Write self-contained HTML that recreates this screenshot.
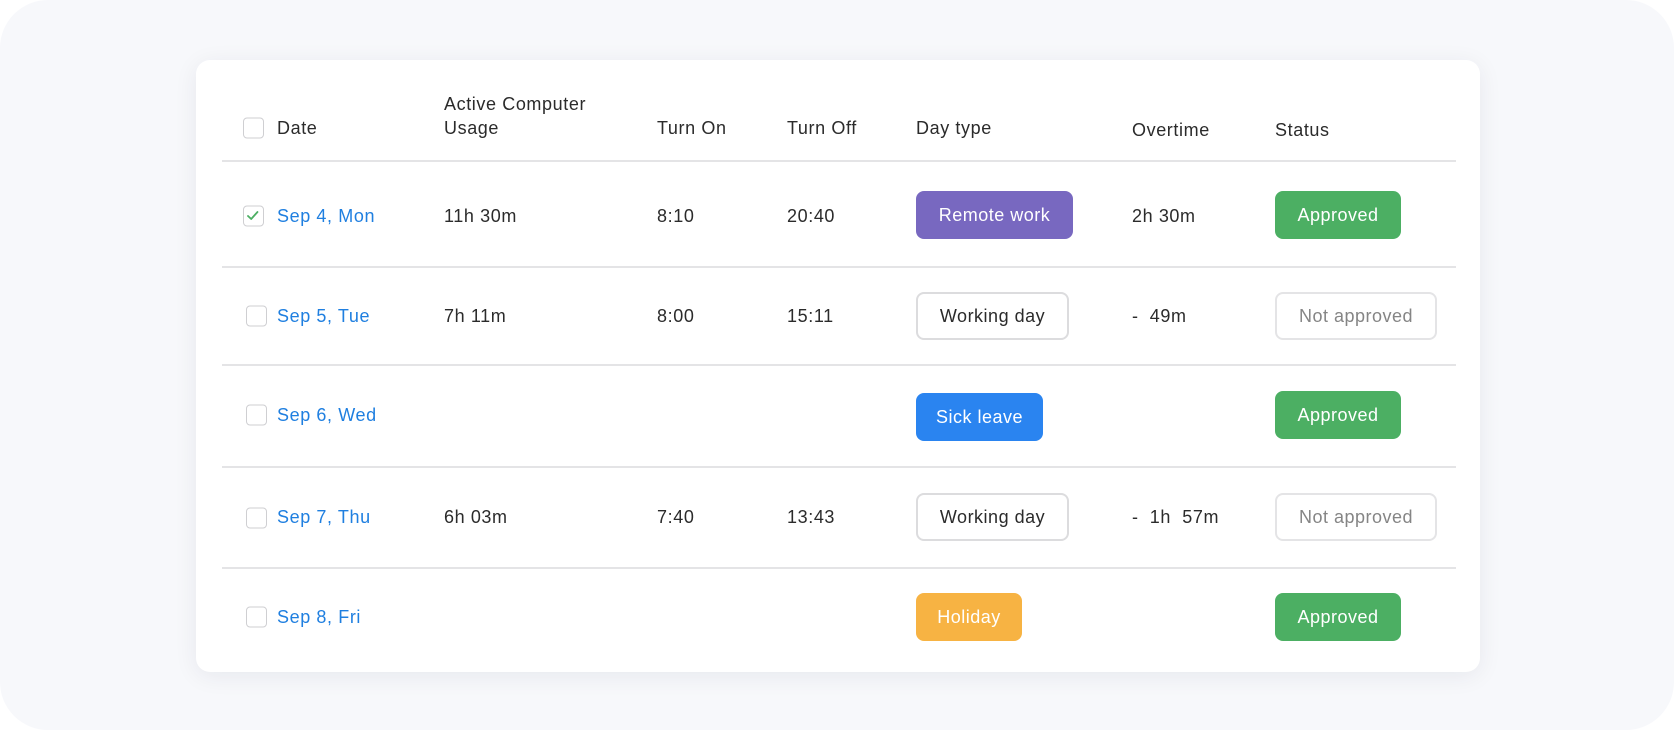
<!DOCTYPE html>
<html><head><meta charset="utf-8"><style>
*{margin:0;padding:0;box-sizing:border-box}
html,body{width:1674px;height:730px;background:#fff;overflow:hidden;font-family:"Liberation Sans",sans-serif}
.bg{position:absolute;left:0;top:0;width:1674px;height:730px;background:#f7f8fb;border-radius:48px}
.card{position:absolute;left:196px;top:60px;width:1284px;height:612px;background:#fff;border-radius:14px;box-shadow:0 4px 24px rgba(20,30,60,.07)}
.t{position:absolute;font-size:18px;color:#2b2b2b;line-height:22px;white-space:nowrap;transform:translateY(-50%);letter-spacing:0.6px}
.d{color:#1f7fe0}
.line{position:absolute;left:222px;width:1234px;height:2px;background:#e4e4e6}
.cb{position:absolute;width:21px;height:21px;border:1.5px solid #cfcfd2;border-radius:4px;background:#fff;transform:translateY(-50%)}
.p{position:absolute;height:48px;border-radius:8px;font-size:18px;line-height:48px;text-align:center;color:#fff;transform:translateY(-50%);white-space:nowrap;letter-spacing:0.5px}
.o{border:2px solid #dcdcde;color:#2b2b2b;line-height:44px}
.n{border:2px solid #e4e4e6;color:#858585;line-height:44px}
.g{background:#4caf63}
</style></head><body>
<div class="bg"></div>
<div class="card"></div>

<div class="cb" style="left:243px;top:128px"></div>
<div class="t" style="left:277px;top:128px">Date</div>
<div class="t" style="left:444px;top:104px">Active Computer</div>
<div class="t" style="left:444px;top:128px">Usage</div>
<div class="t" style="left:657px;top:128px">Turn On</div>
<div class="t" style="left:787px;top:128px">Turn Off</div>
<div class="t" style="left:916px;top:128px">Day type</div>
<div class="t" style="left:1132px;top:130px">Overtime</div>
<div class="t" style="left:1275px;top:130px">Status</div>
<div class="line" style="top:160px"></div>

<div class="cb" style="left:243px;top:216px"><svg width="18" height="18" viewBox="0 0 18 18" style="position:absolute;left:0;top:0"><path d="M4 9.5l3.2 3L13.5 5.5" fill="none" stroke="#4caf63" stroke-width="1.8" stroke-linecap="round" stroke-linejoin="round"/></svg></div>
<div class="t d" style="left:277px;top:216px">Sep 4, Mon</div>
<div class="t" style="left:444px;top:216px">11h 30m</div>
<div class="t" style="left:657px;top:216px">8:10</div>
<div class="t" style="left:787px;top:216px">20:40</div>
<div class="p" style="left:916px;top:215px;width:157px;background:#7868c0">Remote work</div>
<div class="t" style="left:1132px;top:216px">2h 30m</div>
<div class="p g" style="left:1275px;top:215px;width:126px">Approved</div>
<div class="line" style="top:266px"></div>

<div class="cb" style="left:246px;top:316px"></div>
<div class="t d" style="left:277px;top:316px">Sep 5, Tue</div>
<div class="t" style="left:444px;top:316px">7h 11m</div>
<div class="t" style="left:657px;top:316px">8:00</div>
<div class="t" style="left:787px;top:316px">15:11</div>
<div class="p o" style="left:916px;top:316px;width:153px">Working day</div>
<div class="t" style="left:1132px;top:316px">-&nbsp; 49m</div>
<div class="p n" style="left:1275px;top:316px;width:162px">Not approved</div>
<div class="line" style="top:364px"></div>

<div class="cb" style="left:246px;top:415px"></div>
<div class="t d" style="left:277px;top:415px">Sep 6, Wed</div>
<div class="p" style="left:916px;top:417px;width:127px;background:#2a84f0">Sick leave</div>
<div class="p g" style="left:1275px;top:415px;width:126px">Approved</div>
<div class="line" style="top:466px"></div>

<div class="cb" style="left:246px;top:518px"></div>
<div class="t d" style="left:277px;top:517px">Sep 7, Thu</div>
<div class="t" style="left:444px;top:517px">6h 03m</div>
<div class="t" style="left:657px;top:517px">7:40</div>
<div class="t" style="left:787px;top:517px">13:43</div>
<div class="p o" style="left:916px;top:517px;width:153px">Working day</div>
<div class="t" style="left:1132px;top:517px">-&nbsp; 1h&nbsp; 57m</div>
<div class="p n" style="left:1275px;top:517px;width:162px">Not approved</div>
<div class="line" style="top:567px"></div>

<div class="cb" style="left:246px;top:617px"></div>
<div class="t d" style="left:277px;top:617px">Sep 8, Fri</div>
<div class="p" style="left:916px;top:617px;width:106px;background:#f7b343">Holiday</div>
<div class="p g" style="left:1275px;top:617px;width:126px">Approved</div>
</body></html>
